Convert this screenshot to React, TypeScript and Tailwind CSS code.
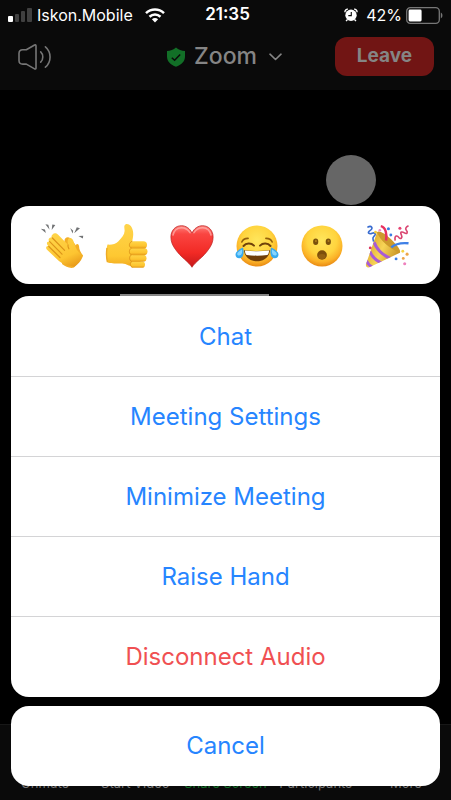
import React from 'react';

interface MenuAction {
  label: string;
  danger?: boolean;
}

const ACTIONS: MenuAction[] = [
  { label: 'Chat' },
  { label: 'Meeting Settings' },
  { label: 'Minimize Meeting' },
  { label: 'Raise Hand' },
  { label: 'Disconnect Audio', danger: true },
];

const SignalIcon = () => (
  <svg width="25" height="16" viewBox="0 0 25 16" aria-hidden="true">
    <rect x="0" y="9" width="5" height="6" rx="1" fill="#fff" />
    <rect x="7" y="7" width="4" height="8" rx="1" fill="#404040" />
    <rect x="13" y="4" width="4" height="11" rx="1" fill="#404040" />
    <rect x="19" y="1" width="5" height="14" rx="1" fill="#404040" />
  </svg>
);

const WifiIcon = () => (
  <svg width="20" height="15" viewBox="0 0 20 15" aria-hidden="true">
    <path d="M10 14.4 6.9 11.2c1.8-1.6 4.4-1.6 6.2 0Z" fill="#fff" />
    <g fill="none" stroke="#fff" strokeWidth="2.5">
      <path d="M4.500 8.700c3.200-2.900 7.800-2.900 11 0" />
      <path d="M1 5.200c5.100-4.900 12.900-4.900 18 0" />
    </g>
  </svg>
);

const AlarmIcon = () => (
  <svg width="14" height="14" viewBox="0 0 15 15" aria-hidden="true">
    <circle cx="7.500" cy="7.800" r="6.100" fill="#fff" />
    <path d="M1 4.500A3 3 0 0 1 4.200 1.200M14 4.500a3 3 0 0 0-3.200-3.300M3.500 12.500l-1.300 1.500M11.500 12.500l1.300 1.500" stroke="#fff" strokeWidth="1.500" fill="none" />
    <path d="M7.800 4.200v4H4.600" stroke="#0a0a0a" strokeWidth="1.200" fill="none" />
  </svg>
);

const BatteryIcon = () => (
  <svg width="37" height="17" viewBox="0 0 37 17" aria-hidden="true">
    <rect x=".7" y=".7" width="32.600" height="15.600" rx="3.600" fill="none" stroke="#777" strokeWidth="1.300" />
    <rect x="2.600" y="2.600" width="13" height="11.800" rx="1.300" fill="#fff" />
    <path d="M34.800 5.600c2.200.8 2.200 5 0 5.800Z" fill="#777" />
  </svg>
);

const SpeakerIcon = () => (
  <svg width="34" height="26" viewBox="0 0 34 26" fill="none" stroke="#767676" strokeWidth="1.600" strokeLinecap="round" strokeLinejoin="round" aria-hidden="true">
    <path d="M1 9.500Q1 5.800 4.700 5.800H8.300L16.600 1Q18 .4 18 1.900V23.900Q18 25.500 16.600 24.900L8.300 20.100H4.700Q1 20.100 1 16.400Z" />
    <path d="M22.700 7.800c2.800 2.600 2.800 7.800 0 10.400M27.400 2.800c6.200 5.200 6.200 15.200 0 20.400" />
  </svg>
);

const ShieldIcon = () => (
  <svg width="20" height="20" viewBox="0 0 20 20" aria-hidden="true">
    <path d="M10 .4C7.500 2.600 4.400 3.800 1 4v5.500c0 5 3.700 8.400 9 10.300 5.300-1.900 9-5.300 9-10.300V4C15.600 3.800 12.500 2.600 10 .4Z" fill="#126f27" />
    <path d="m5.800 10.700 2.800 2.600 5.600-5.900" fill="none" stroke="#0a0a0a" strokeWidth="1.500" />
  </svg>
);

const ChevronIcon = () => (
  <svg width="13" height="8" viewBox="0 0 13 8" aria-hidden="true">
    <path d="m1 1.200 5.500 5.300L12 1.200" fill="none" stroke="#858585" strokeWidth="1.600" strokeLinecap="round" strokeLinejoin="round" />
  </svg>
);

const ClapEmoji = () => (
  <svg className="size-11" viewBox="0 0 44 44" aria-hidden="true">
    <defs>
      <linearGradient id="clap" x1=".2" y1="0" x2=".7" y2="1">
        <stop offset="0" stopColor="#ffd54a" />
        <stop offset=".7" stopColor="#fdc531" />
        <stop offset="1" stopColor="#e99c1b" />
      </linearGradient>
    </defs>
    <path d="m.8 4.800 4.200.7.800 3.400ZM5.400.3l2.900.4 1.300 5ZM15.300 1l-3-.6-.6 5.600ZM30.200 4l3 2.800-.6 2.800ZM40 4.200l-3.200-1L34.200 9.300ZM43.200 11.700l-4.800.4 4.500 2.500Z" fill="#717375" />
    {/* back hand */}
    <path d="M24.500 17c-.2-3.500 3.500-5 6-2.500l5.500 7c.5-2.500 2.800-1.500 3 .6.2 3.800 1.600 6.500 4.100 9.500L34 43.600c-4 1-8.500-.6-12-3.600Z" fill="#f3ae27" />
    {/* front hand */}
    <path d="M12.600 10.400c1.400-1.700 3.800-1.300 5.300.2L28 20.800c-.5-2.700-.8-5.500 1.200-6.600 1.800-1 3.500.6 4.200 2.700l2.500 6.800c1.200 3.200 3.700 5.200 6.500 7.600.6.500.4 1.400-.2 2.500-1.500 3.400-4 6.500-7.200 8.600-.8.500-1.500.5-2.300.1-2-.9-4.100-.6-6.500-1.400-3.700-1.200-6.600-3.400-9.400-6.100L7.300 26c-2.200-2.200-.9-4.500 1-4-2.400-2.400-1.400-4.800.8-4.600-1.400-2.200.3-4.400 2.500-3.800-.4-1.100-.1-2.300 1-3.200Z" fill="url(#clap)" />
    <path d="m12.400 14 12.200 12.300M9.700 17.700 22 30.200M8.800 22.500l11.200 11" fill="none" stroke="#dc9319" strokeWidth="1.200" strokeLinecap="round" />
    <path d="M28 20.800c-.2 1.400.1 2.700.9 4" fill="none" stroke="#dc9319" strokeWidth="1.100" strokeLinecap="round" />
  </svg>
);

const ThumbEmoji = () => (
  <svg className="size-11" viewBox="0 0 44 44" aria-hidden="true">
    <defs>
      <linearGradient id="thumb" x1="0" y1="0" x2="0" y2="1">
        <stop offset="0" stopColor="#ffd44b" />
        <stop offset=".75" stopColor="#fec832" />
        <stop offset="1" stopColor="#f2ac22" />
      </linearGradient>
      <linearGradient id="finger" x1="0" y1="0" x2="0" y2="1">
        <stop offset="0" stopColor="#ffd548" />
        <stop offset=".65" stopColor="#fdc42f" />
        <stop offset="1" stopColor="#e59a19" />
      </linearGradient>
    </defs>
    <path d="M2.500 20.600c4 .3 8-.3 10.700-3.200 3.500-3.500 6.300-6.800 6.400-10.400.1-2-.6-3.600-.2-5 .8-2.800 4.400-2.500 6.400.1 3 4 3 9 1.200 15.600l10 2-2 22.300c-5 .8-9.500.5-13-1.200-3-1.700-6.500-1.200-9.500-1.300-4.500-.2-9-.3-10.300-1.300C.9 32.500.8 26 2.500 20.600Z" fill="url(#thumb)" />
    <g fill="url(#finger)">
      <rect x="25.500" y="37.500" width="14.500" height="6.300" rx="3.100" />
      <rect x="24.500" y="30.700" width="17" height="7.100" rx="3.500" />
      <rect x="24.500" y="23.900" width="18" height="7.300" rx="3.600" />
      <rect x="25" y="17.200" width="17" height="7.300" rx="3.600" />
    </g>
    <path d="M27 17.300c-3.300 1-3.500 5.700-.5 6.800-2.800 1.200-2.800 5.600-.1 6.800-2.400 1.300-2.400 5.300.3 6.700-2 1.200-1.700 4.200.3 5.700" fill="none" stroke="#df971a" strokeWidth="1" strokeLinecap="round" />
    <path d="M2 24c-.6 3.600-.5 10 .4 14" fill="none" stroke="#edab27" strokeWidth="1.400" />
  </svg>
);

const HeartEmoji = () => (
  <svg className="size-11" viewBox="0 0 44 44" aria-hidden="true">
    <defs>
      <linearGradient id="heart" x1="0" y1="0" x2="0" y2="1">
        <stop offset="0" stopColor="#ff7f7a" />
        <stop offset=".2" stopColor="#fa4541" />
        <stop offset=".65" stopColor="#f22a25" />
        <stop offset="1" stopColor="#c5181a" />
      </linearGradient>
    </defs>
    <path d="M22 43.300C18.500 37.500 11 33.500 5.500 25.500 2.500 21.500.9 17.500.9 13 .9 6.300 5.500 1.700 11.300 1.700c4.700 0 8.600 2.700 10.700 7.300 2.100-4.600 6-7.300 10.700-7.300 5.800 0 10.400 4.600 10.400 11.300 0 4.500-1.600 8.500-4.600 12.500C33 33.500 25.500 37.500 22 43.300Z" fill="url(#heart)" stroke="#b81c1c" strokeWidth=".7" />
    <path d="M3 11C4 6.500 7.500 3.700 11.300 3.700c3.700 0 6.700 1.800 8.700 5M24 8.700c2-3.200 5-5 8.700-5 3.800 0 7.300 2.800 8.300 7.300" fill="none" stroke="#ffb5b0" strokeWidth="1.600" opacity=".7" strokeLinecap="round" />
  </svg>
);

const FaceGradient = ({ id }: { id: string }) => (
  <defs>
    <radialGradient id={id} cx=".5" cy=".36" r=".66">
      <stop offset="0" stopColor="#ffe65c" />
      <stop offset=".55" stopColor="#ffd43e" />
      <stop offset=".8" stopColor="#fbb127" />
      <stop offset="1" stopColor="#e5820f" />
    </radialGradient>
  </defs>
);

const JoyEmoji = () => (
  <svg className="size-11" viewBox="0 0 44 44" aria-hidden="true">
    <FaceGradient id="joy" />
    <circle cx="22" cy="22" r="20.500" fill="url(#joy)" />
    <path d="M6.800 18c1.200-2.600 3.400-3.700 6.300-3.600M37.200 18c-1.200-2.600-3.400-3.700-6.300-3.600" fill="none" stroke="#94600d" strokeWidth="1.600" strokeLinecap="round" />
    <path d="M8.500 22c2.600-3 7.500-3.300 10.500-.4M35.500 22c-2.600-3-7.500-3.300-10.500-.4" fill="none" stroke="#70420a" strokeWidth="2" strokeLinecap="round" />
    <path d="M9 26.200c8.500 1.100 17.500 1.100 26 0-.5 6.500-5.800 11.100-13 11.100S9.500 32.700 9 26.200Z" fill="#6f3d08" />
    <path d="M9.900 26.500c8 1 16.200 1 24.200 0-.2 2.400-.8 4-1.800 4.400-6.500 1-14.100 1-20.600 0-1-.4-1.600-2-1.800-4.400Z" fill="#fff" />
    <path d="M8 23.500c1.400 4.700.6 10.500-3.600 10.800-3.500.2-4.900-3.500-3.100-6C3 26 6 24.200 8 23.500ZM36 23.500c-1.400 4.700-.6 10.500 3.600 10.800 3.500.2 4.900-3.500 3.100-6C41 26 38 24.200 36 23.500Z" fill="#37aaf0" />
    <path d="M7 25.400c.6 3.400-.5 6-2.900 6.100-2.300 0-2.300-2.200-1-3.300 1.100-1.100 2.600-2 3.900-2.800ZM37 25.400c-.6 3.400.5 6 2.900 6.100 2.300 0 2.300-2.200 1-3.300-1.100-1.100-2.600-2-3.900-2.800Z" fill="#86d5ff" />
  </svg>
);

const WowEmoji = () => (
  <svg className="size-11" viewBox="0 0 44 44" aria-hidden="true">
    <FaceGradient id="wow" />
    <circle cx="22" cy="22" r="20.500" fill="url(#wow)" />
    <ellipse cx="15.700" cy="17.700" rx="2.600" ry="3.300" fill="#79500c" />
    <ellipse cx="28.300" cy="17.700" rx="2.600" ry="3.300" fill="#79500c" />
    <ellipse cx="15.900" cy="16.900" rx="1" ry="1.200" fill="#a97819" />
    <ellipse cx="28.500" cy="16.900" rx="1" ry="1.200" fill="#a97819" />
    <ellipse cx="22" cy="31" rx="4.900" ry="4.700" fill="#7d4e0b" />
    <ellipse cx="22" cy="32.500" rx="3.600" ry="2.600" fill="#925f12" />
  </svg>
);

const PartyEmoji = () => (
  <svg className="size-11" viewBox="0 0 46 46" aria-hidden="true">
    <defs>
      <linearGradient id="cone" x1="0" y1=".3" x2="1" y2=".8">
        <stop offset="0" stopColor="#d9a329" />
        <stop offset=".45" stopColor="#f7d456" />
        <stop offset="1" stopColor="#bd861d" />
      </linearGradient>
      <clipPath id="coneClip">
        <path d="M12.500 8.800c4 8.500 11.500 16 24 21.200L4.700 45.300c-2.600 1-4.200-.9-3.700-3.100Z" />
      </clipPath>
    </defs>
    <path d="M12.500 8.800c1-3 8 .5 14.500 7s11 12 9.500 14.200c-2.500 1.500-9-2-15-8s-10-11-9-13.200Z" fill="#cd9a2c" />
    <path d="M12.500 8.800c4 8.500 11.500 16 24 21.200L4.700 45.300c-2.600 1-4.200-.9-3.700-3.100Z" fill="url(#cone)" />
    <g clipPath="url(#coneClip)" fill="none" stroke="#a85bd6" strokeWidth="3.200">
      <path d="M9.500 19c3 8 10 14.500 19.500 18" />
      <path d="M5 28.500c2.500 6 7.500 10.500 14 13" />
      <path d="M1 38c1.500 3 4 6 8 8" />
    </g>
    <path d="M16.500 2.200c5.500 1 6.500 9 5.500 15" fill="none" stroke="#e8315f" strokeWidth="2.600" />
    <path d="M27.500 24.500c5-4.500 11-5 18-4.300" fill="none" stroke="#3f80e6" strokeWidth="2.600" />
    <path d="M2.500 3.500c4.500-2.500 6.500 1 3 3.200-4 2.400-1 4.300 2 3 3.500-1.200 4.300 1 1.800 3.200-2.300 2-.6 3-.3 5.600" fill="none" stroke="#376bd0" strokeWidth="1.700" />
    <path d="M31.500 17.300c-1-6 2.500-5.300 3.800-3.300 2 2.900 4.200 0 2.700-2.700-1.700-3.200.7-3.700 3.200-2 2.700 1.800 4-.5 2-2.700-1.700-2 .2-3.800 2.300-4.800" fill="none" stroke="#d94470" strokeWidth="1.700" />
    <g>
      <circle cx="24.500" cy="5" r="1.600" fill="#347be4" />
      <circle cx="27" cy="11.500" r="1.500" fill="#3b7de5" />
      <circle cx="36.500" cy="4.500" r="1.600" fill="#e64373" />
      <circle cx="5.500" cy="25" r="1.500" fill="#da3560" />
      <circle cx="11" cy="8.500" r="1.500" fill="#f4c93d" />
      <circle cx="15.500" cy="6.500" r="1.400" fill="#ef88c3" />
      <circle cx="39.500" cy="28.500" r="1.500" fill="#f5d345" />
      <circle cx="44" cy="31.500" r="1.600" fill="#eea64a" />
      <circle cx="40" cy="36" r="1.500" fill="#eda347" />
      <circle cx="32.500" cy="36.500" r="1.500" fill="#397ee5" />
      <circle cx="41.500" cy="41.500" r="1.600" fill="#ee80bd" />
    </g>
  </svg>
);

const REACTIONS = [
  { name: 'Clap', Icon: ClapEmoji },
  { name: 'Thumbs up', Icon: ThumbEmoji },
  { name: 'Heart', Icon: HeartEmoji },
  { name: 'Joy', Icon: JoyEmoji },
  { name: 'Open mouth', Icon: WowEmoji },
  { name: 'Tada', Icon: PartyEmoji },
];

const StatusBar = () => (
  <div className="grid h-[30px] grid-cols-[1fr_auto_1fr] items-center pl-2 pr-2 text-base text-white">
    <div className="flex items-center">
      <SignalIcon />
      <span className="ml-1 mr-3">Iskon.Mobile</span>
      <WifiIcon />
    </div>
    <span className="pl-1 text-[17px] font-semibold">21:35</span>
    <div className="flex items-center justify-end">
      <AlarmIcon />
      <span className="ml-2 mr-1">42%</span>
      <BatteryIcon />
    </div>
  </div>
);

const MeetingHeader = () => (
  <div className="grid h-[60px] grid-cols-[1fr_auto_1fr] items-center pb-[7px] pl-[18px] pr-[17px]">
    <button type="button" aria-label="Speaker" className="justify-self-start">
      <SpeakerIcon />
    </button>
    <button type="button" className="flex items-center pr-1 text-[23px] font-medium text-[#858585]">
      <ShieldIcon />
      <span className="ml-2 mr-3">Zoom</span>
      <ChevronIcon />
    </button>
    <button type="button" className="h-[39px] justify-self-end rounded-xl bg-[#711514] px-[22px] text-[19px] font-bold text-[#858585]">
      Leave
    </button>
  </div>
);

const Toolbar = () => (
  <nav className="flex h-[76px] items-end border-t border-[#171717] bg-[#0a0a0a] pb-[7px] text-[13px] text-[#777]">
    <button type="button" className="flex-1">Unmute</button>
    <button type="button" className="flex-1 whitespace-nowrap">Start Video</button>
    <button type="button" className="flex-1 whitespace-nowrap text-[#126f27]">Share Screen</button>
    <button type="button" className="flex-1">Participants</button>
    <button type="button" className="flex-1">More</button>
  </nav>
);

const ActionSheet = () => (
  <div className="absolute inset-x-0 bottom-0 px-[11px] pb-[14px]">
    <div className="flex h-[78px] items-center justify-between rounded-[18px] bg-white pl-[29px] pr-[31px] pt-0.5">
      {REACTIONS.map(({ name, Icon }) => (
        <button key={name} type="button" aria-label={name}>
          <Icon />
        </button>
      ))}
    </div>
    <div className="ml-[109px] mt-[10px] h-[2px] w-[149px] bg-[#858585]" />
    <div className="divide-y divide-[#d4d4d6] overflow-hidden rounded-[18px] bg-white pt-px">
      {ACTIONS.map(({ label, danger }) => (
        <button
          key={label}
          type="button"
          className={`block h-20 w-full text-2xl ${danger ? 'text-[#f05052]' : 'text-[#2685ff]'}`}
        >
          {label}
        </button>
      ))}
    </div>
    <button type="button" className="mt-[9px] block h-20 w-full rounded-[18px] bg-white text-2xl text-[#2685ff]">
      Cancel
    </button>
  </div>
);

const App: React.FC = () => {
  return (
    <div className="relative flex min-h-screen flex-col overflow-hidden bg-black font-[Inter,sans-serif]">
      <header className="bg-[#0a0a0a]">
        <StatusBar />
        <MeetingHeader />
      </header>
      <main className="flex-1" />
      <Toolbar />
      {/* touch indicator */}
      <div className="absolute right-[75px] top-[155px] size-[50px] rounded-full bg-[#666]" />
      <ActionSheet />
    </div>
  );
};

export default App;
